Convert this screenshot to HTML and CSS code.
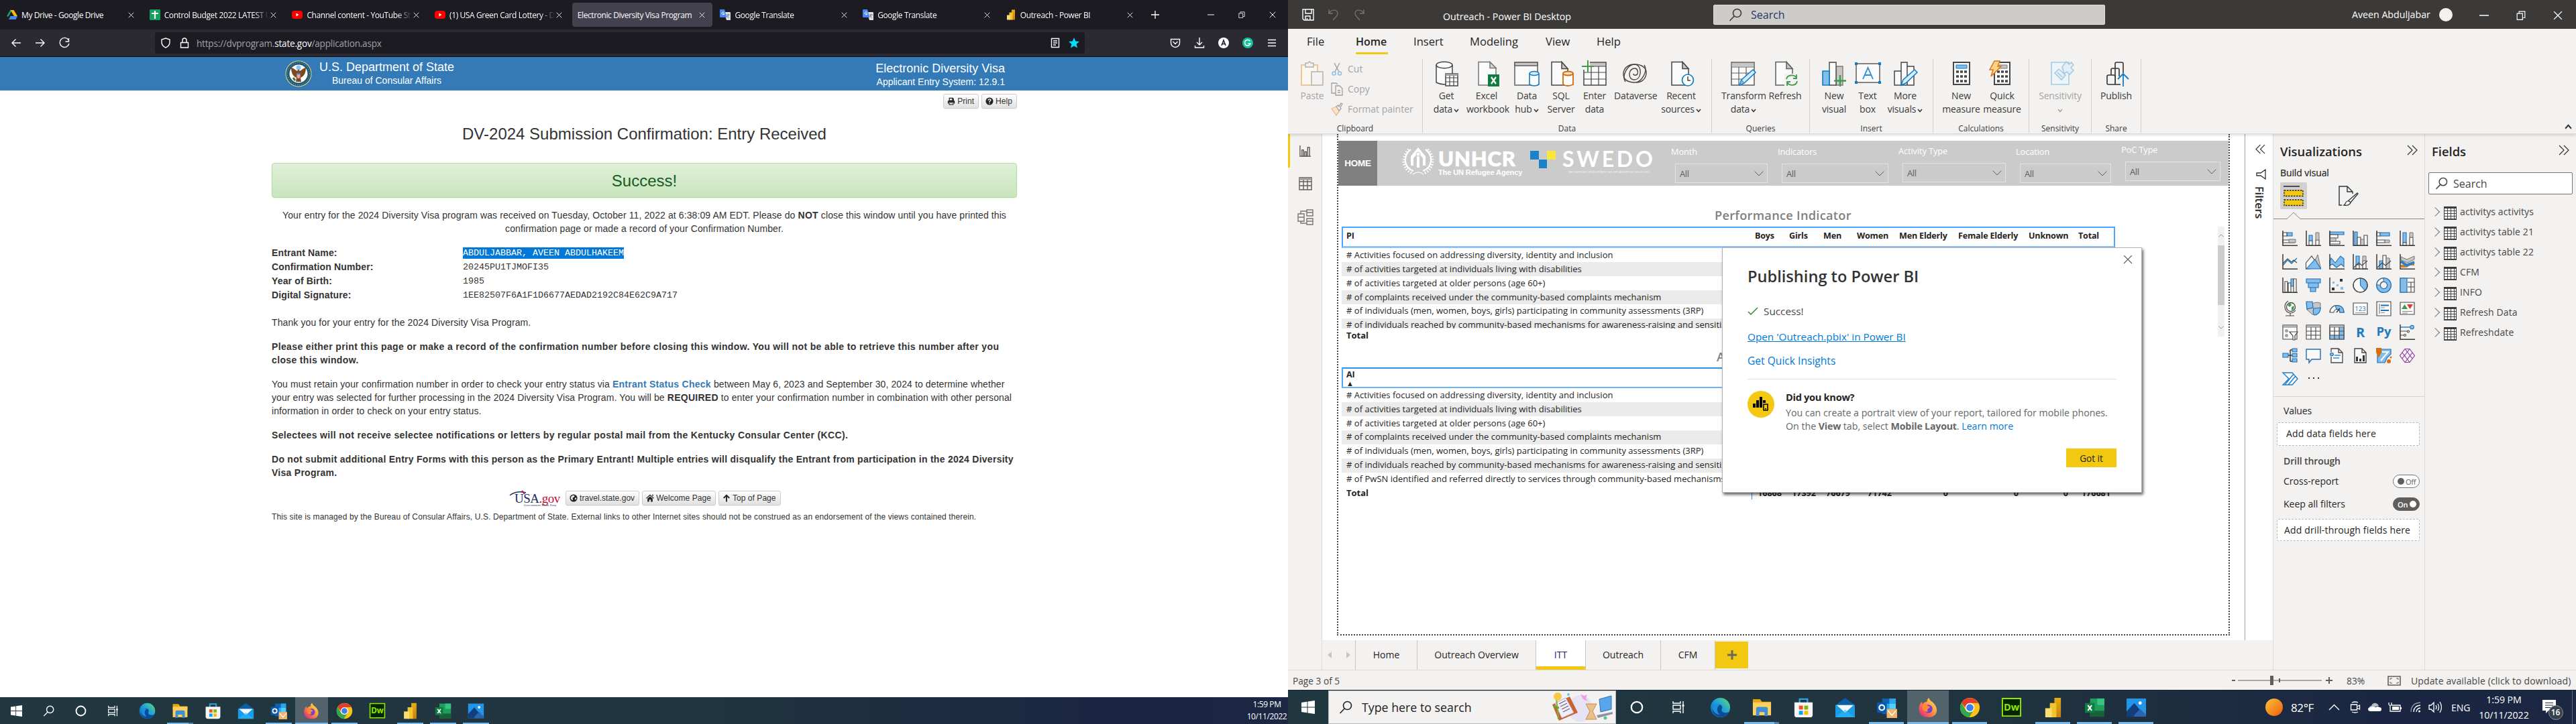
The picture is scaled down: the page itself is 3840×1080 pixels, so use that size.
FILE: index.html
```html
<!DOCTYPE html>
<html lang="en">
<head>
<meta charset="utf-8">
<title>Desktop</title>
<link rel="stylesheet" href="styles.css">
</head>
<body>
<svg class="sprite" aria-hidden="true">
  <defs>
    <linearGradient id="gEdge" x1="0" y1="1" x2="1" y2="0"><stop offset="0" stop-color="#0c59a4"/><stop offset=".5" stop-color="#1b9de2"/><stop offset="1" stop-color="#5fe06a"/></linearGradient>
    <linearGradient id="gFox" x1="1" y1="0" x2="0" y2="1"><stop offset="0" stop-color="#fff44f"/><stop offset=".45" stop-color="#ff9640"/><stop offset="1" stop-color="#e31587"/></linearGradient>
    <linearGradient id="gSun" x1="0" y1="0" x2="1" y2="1"><stop offset="0" stop-color="#f8c43a"/><stop offset="1" stop-color="#ee5d0a"/></linearGradient>
    <linearGradient id="gBi" x1="0" y1="0" x2="0" y2="1"><stop offset="0" stop-color="#e6ad10"/><stop offset="1" stop-color="#c87e0e"/></linearGradient>
  </defs>
  <symbol id="win" viewBox="0 0 20 20"><path fill="#fff" d="M0 3l8.500-1.200V9.500H0zM9.500 1.600L20 0v9.500H9.500zM0 10.500h8.500v7.700L0 17zM9.500 10.500H20V20L9.500 18.400z"/></symbol>
  <symbol id="mag" viewBox="0 0 20 20"><g fill="none" stroke="currentColor" stroke-width="1.600"><circle cx="12.500" cy="7.500" r="6"/><path d="M8.200 12L1.500 19"/></g></symbol>
  <symbol id="ring" viewBox="0 0 20 20"><circle cx="10" cy="10" r="8.200" fill="none" stroke="#fff" stroke-width="2.200"/></symbol>
  <symbol id="tview" viewBox="0 0 20 20"><g fill="none" stroke="#fff" stroke-width="1.400"><path d="M2 1v3h11V1M2 19v-3h11v3M2 7h11v6H2zM17 1v18"/><path d="M15.500 7.500h3" stroke-width="2.500"/></g></symbol>
  <symbol id="edge" viewBox="0 0 32 32"><circle cx="16" cy="16" r="15" fill="url(#gEdge)"/><path d="M4 20C3 11 17 8 19 15c0 3-2 3-1 6 2 4 8 4 12 1-4 8-14 11-21 6-3-2-5-5-5-8z" fill="#0b4c97"/><path d="M15 12c-5 3-5 10 0 15-8-1-13-8-10-13 2-3 7-4 10-2z" fill="#1b8fd8"/></symbol>
  <symbol id="folder" viewBox="0 0 32 32"><path fill="#e8a50c" d="M2 3h11l3 4h14v6H2z"/><path fill="#ffd15c" d="M2 8h28v20H2z"/><path fill="#3d8fd6" d="M7 29V18q0-3 3-3h12q3 0 3 3v11h-5v-6h-8v6z"/></symbol>
  <symbol id="store" viewBox="0 0 32 32"><path d="M10 9V3h12v6" fill="none" stroke="#2ea3ea" stroke-width="2.500"/><path fill="#f5f5f5" d="M2 8h28v19q0 4-4 4H6q-4 0-4-4z"/><path fill="#f25022" d="M9 13h6v6H9z"/><path fill="#7fba00" d="M17 13h6v6h-6z"/><path fill="#00a4ef" d="M9 21h6v6H9z"/><path fill="#ffb900" d="M17 21h6v6h-6z"/></symbol>
  <symbol id="mail" viewBox="0 0 32 32"><path fill="#0a5ea8" d="M1 12L16 1l15 11z"/><path fill="#1a9be8" d="M1 12h30v19H1z"/><path fill="#f4f8fb" d="M3 12h26L16 24z"/><path fill="#30b8f5" d="M1 31l15-12 15 12z" opacity=".6"/></symbol>
  <symbol id="outlook" viewBox="0 0 32 32"><path fill="#0f63b5" d="M9 2h21v24H9z"/><path fill="#2ba6ee" d="M20 2h10v8H20zM9 10h11v8H9z"/><path fill="#50d0ff" d="M20 10h10v8H20z"/><path fill="#0a58ad" d="M1 8h15v16H1z"/><circle cx="8.500" cy="16" r="4" fill="none" stroke="#fff" stroke-width="2.200"/><path fill="#f0b56c" d="M16 18h16v14H16z"/><path d="M18 21l6 7 6-7" fill="none" stroke="#fff" stroke-width="1.500"/></symbol>
  <symbol id="firefox" viewBox="0 0 32 32"><path fill="url(#gFox)" d="M17 1c1 4 4 5 7 8 8 8 7 22-8 22C4 31 0 22 2 14c1-3 2-5 4-7l1 4c2-3 5-4 7-4 0-3 1-5 3-6z"/><circle cx="16" cy="18" r="6.500" fill="#7a3fd0"/><path fill="#ff8b2e" d="M8 13c3-2 6-1 8 1 3 0 3 2 1 3-3 1-3 4-1 5-6 2-11-4-8-9z"/></symbol>
  <symbol id="chrome" viewBox="0 0 32 32"><circle cx="16" cy="16" r="15" fill="#fbc116"/><path fill="#e33b2e" d="M3 8.500a15 15 0 0126 .5H16a7 7 0 00-7 7z"/><path fill="#2da94f" d="M3 8.500A15 15 0 0015 31l6.500-11a7 7 0 01-12 0z"/><circle cx="16" cy="16" r="7" fill="#fff"/><circle cx="16" cy="16" r="5.500" fill="#3b7ded"/></symbol>
  <symbol id="dw" viewBox="0 0 32 32"><path fill="#072401" stroke="#8fe800" stroke-width="2" d="M2 2h28v27H2z"/><text x="16" y="21" text-anchor="middle" font-family="Open Sans,sans-serif" font-size="15" font-weight="700" fill="#8fe800">Dw</text></symbol>
  <symbol id="pbi" viewBox="0 0 32 32"><path fill="url(#gBi)" d="M18 1h10v30H18z"/><path fill="#f2c430" d="M11 9h10v22H11z"/><path fill="#f9df72" d="M4 17h10v14H4z"/></symbol>
  <symbol id="excel" viewBox="0 0 32 32"><path fill="#1f9d5c" d="M9 2h22v28H9z"/><path fill="#37c481" d="M20 2h11v10H20z"/><path fill="#17613a" d="M9 21h22v9H9z"/><path fill="#107c41" d="M1 9h15v15H1z"/><path stroke="#fff" stroke-width="2.200" d="M5.500 12.500l6 8M11.500 12.500l-6 8"/></symbol>
  <symbol id="photos" viewBox="0 0 32 32"><path fill="#2196e8" d="M1 2h30v28H1z"/><path fill="#103f7c" d="M1 22L13 9l17 21H1z"/><path fill="#2b63ad" d="M14 26l8-8 9 9v3H12z"/><circle cx="22" cy="9" r="2.500" fill="#fff"/></symbol>
  <symbol id="x" viewBox="0 0 10 10"><path d="M.8.8l8.400 8.400M9.200.8L.8 9.200" fill="none" stroke="currentColor" stroke-width="1"/></symbol>
  <symbol id="restore" viewBox="0 0 12 12"><path d="M1 3.500h7v8H1zM3.500 3V1H11v8H8.500" fill="none" stroke="currentColor"/></symbol>
  <symbol id="gdrive" viewBox="0 0 16 16"><path fill="#1fa463" d="M5.300 1H8L3 10 1 11 0 10z"/><path fill="#fbbc04" d="M5.500 1h5L16 10h-5z"/><path fill="#4285f4" d="M3 15l2.500-5H16l-2.500 5z"/></symbol>
  <symbol id="sheets" viewBox="0 0 16 16"><rect width="16" height="16" rx="1.500" fill="#12a05c"/><path d="M8 2v12M3 6h10" stroke="#fff" stroke-width="2.200"/></symbol>
  <symbol id="yt" viewBox="0 0 16 16"><rect y="2" width="16" height="12" rx="4" fill="#f00"/><path fill="#fff" d="M6.500 5.500l4 2.500-4 2.500z"/></symbol>
  <symbol id="gtr" viewBox="0 0 16 16"><path fill="#dcdfe3" d="M6 4h9q1 0 1 1v11h-6z"/><path fill="#4a86f0" d="M0 1q0-1 1-1h6l3.500 12H1q-1 0-1-1z"/><path d="M6.500 4.500a2 2 0 10.500 2H5" fill="none" stroke="#fff" stroke-width="1"/><path d="M10 8h5M12.500 7v1c0 2-1 3-2 4m.5-3c1 2 2 3 3 3.500" fill="none" stroke="#6a7380" stroke-width=".9"/></symbol>
  <symbol id="dbl" viewBox="0 0 16 16"><path d="M1 1l7 7-7 7M8 1l7 7-7 7" fill="none" stroke="#333" stroke-width="1.200"/></symbol>
  <symbol id="car" viewBox="0 0 8 6"><path d="M1 1l3 3.500L7 1" fill="none" stroke="currentColor" stroke-width="1.600"/></symbol>
  <symbol id="chev" viewBox="0 0 14 8"><path d="M.7.7L7 7 13.300.7" fill="none" stroke="currentColor" stroke-width="1"/></symbol>
  <symbol id="globe" viewBox="0 0 14 14"><circle cx="7" cy="7" r="6.500" fill="#222"/><path fill="#eee" d="M6 2l3 1-1 2-3 2 1 2-1 2-3-3 1-4zM10 6l2 1-1 3-2-1z"/></symbol>
</svg>

<div class="desktop">
<!-- ============ left monitor: Firefox ============ -->
<section class="screen firefox">
  <div class="tabs">
    <div class="tab"><svg class="i16"><use href="#gdrive"/></svg><span>My Drive - Google Drive</span><svg class="tx"><use href="#x"/></svg></div>
    <div class="tab"><svg class="i16"><use href="#sheets"/></svg><span>Control Budget 2022 LATEST U</span><svg class="tx"><use href="#x"/></svg></div>
    <div class="tab"><svg class="i16"><use href="#yt"/></svg><span>Channel content - YouTube St</span><svg class="tx"><use href="#x"/></svg></div>
    <div class="tab"><svg class="i16"><use href="#yt"/></svg><span>(1) USA Green Card Lottery - D</span><svg class="tx"><use href="#x"/></svg></div>
    <div class="tab active"><span>Electronic Diversity Visa Program</span><svg class="tx"><use href="#x"/></svg></div>
    <div class="tab"><svg class="i16"><use href="#gtr"/></svg><span>Google Translate</span><svg class="tx"><use href="#x"/></svg></div>
    <div class="tab"><svg class="i16"><use href="#gtr"/></svg><span>Google Translate</span><svg class="tx"><use href="#x"/></svg></div>
    <div class="tab"><svg class="i16"><use href="#pbi"/></svg><span>Outreach - Power BI</span><svg class="tx"><use href="#x"/></svg></div>
    <svg class="plus" viewBox="0 0 12 12"><path d="M6 0v12M0 6h12" stroke="#fff" stroke-width="1.300"/></svg>
    <div class="wctl"><svg viewBox="0 0 10 10"><path d="M0 5h10" stroke="#fff"/></svg><svg><use href="#restore"/></svg><svg><use href="#x"/></svg></div>
  </div>
  <div class="nav">
    <div class="navbtns">
      <svg viewBox="0 0 16 16"><path d="M15 8H2M7.500 2.500L2 8l5.500 5.500" class="ln"/></svg>
      <svg viewBox="0 0 16 16"><path d="M1 8h13M8.500 2.500L14 8l-5.500 5.500" class="ln"/></svg>
      <svg viewBox="0 0 16 16"><path d="M14 3.500A7 7 0 1015 9M14.500 1v5h-5" class="ln"/></svg>
    </div>
    <div class="url">
      <svg viewBox="0 0 16 16"><path d="M8 1l6 2v4c0 4-2.500 6.500-6 8.200C4.500 13.500 2 11 2 7V3z" class="ln"/></svg>
      <svg viewBox="0 0 16 16"><path d="M2.500 7.500h11v7.500h-11zM5 7.500V4q0-3 3-3t3 3v3.500" class="ln"/></svg>
      <p>https://dvprogram.<b>state.gov</b>/application.aspx</p>
      <svg viewBox="0 0 16 16"><path d="M2.500 1.500h11v13h-11zM5 5h6M5 8h6M5 11h4" class="ln"/></svg>
      <svg viewBox="0 0 16 16"><path fill="#00ddff" d="M8 0l2.300 5.400 5.700.5-4.300 3.800L13 15.500 8 12.500l-5 3 1.300-5.800L0 5.900l5.700-.5z"/></svg>
    </div>
    <div class="navright">
      <svg viewBox="0 0 16 16"><path d="M1.500 2.500h13V8a6.500 6.500 0 01-13 0zM4.500 6L8 9.500 11.500 6" class="ln"/></svg>
      <svg viewBox="0 0 16 16"><path d="M8 0v11M4 7l4 4 4-4M1.500 12v3h13v-3" class="ln"/></svg>
      <svg viewBox="0 0 16 16"><circle cx="8" cy="8" r="8" fill="#fff"/><path d="M5 12l3-8 3 8M6 9.500h4" fill="none" stroke="#222" stroke-width="1.600"/></svg>
      <svg viewBox="0 0 16 16"><circle cx="8" cy="8" r="8" fill="#15c39a"/><path d="M11.500 5.500A4.300 4.300 0 1012 9H8.500" fill="none" stroke="#fff" stroke-width="1.500"/></svg>
      <svg viewBox="0 0 16 16"><path d="M2 3.500h12M2 8h12M2 12.500h12" class="ln"/></svg>
    </div>
  </div>
  <div class="dos">
    <svg class="seal" viewBox="0 0 40 40"><circle cx="20" cy="20" r="19.500" fill="#e4d58c"/><circle cx="20" cy="20" r="18.500" fill="#1b5a78"/><circle cx="20" cy="20" r="16.500" fill="none" stroke="#d8c97c" stroke-width="1" stroke-dasharray="1 2"/><circle cx="20" cy="20" r="13.500" fill="#fff"/><circle cx="20" cy="11" r="3.500" fill="#8fc4e4"/><path fill="#7a4a22" d="M9 11c3 0 6 3 9 5l2-3 2 3c3-2 6-5 9-5 0 8-3 13-8 15l1 6h-8l1-6c-5-2-8-7-8-15z"/><path fill="#fff" d="M17.500 20h5v5q-2.500 4-5 0z"/><path fill="#4a80c0" d="M17 19h6v2h-6z"/><path d="M18 21v5M20 21v6M22 21v5" stroke="#c8303a" stroke-width=".9"/><path d="M12 26l3 4" stroke="#3c7a34" stroke-width="3"/></svg>
    <div class="dosl"><h1>U.S. Department of State</h1><h2>Bureau of Consular Affairs</h2></div>
    <div class="dosr"><h1>Electronic Diversity Visa</h1><h2>Applicant Entry System: 12.9.1</h2></div>
  </div>
  <main class="doc">
    <div class="tools">
      <a class="btn"><svg viewBox="0 0 14 14"><path fill="#222" d="M3 1h7l1.500 1.500V6H3zM1 6h12v5h-2V9H3v2H1z"/><path fill="#222" d="M3 10h8v3.500H3z"/><path fill="#eee" d="M4.500 2.300h4v3h-4zM4.300 10.500h5.400v1.700H4.300z"/></svg>Print</a>
      <a class="btn"><svg viewBox="0 0 14 14"><circle cx="7" cy="7" r="6.500" fill="#222"/><path d="M4.800 5.500q0-2.200 2.200-2.200t2.200 2Q9.200 6.500 7 7.300V8.500" fill="none" stroke="#fff" stroke-width="1.600"/><path fill="#fff" d="M6.200 9.600h1.700v1.600H6.200z"/></svg>Help</a>
    </div>
    <h3>DV-2024 Submission Confirmation: Entry Received</h3>
    <div class="ok">Success!</div>
    <p class="mid">Your entry for the 2024 Diversity Visa program was received on Tuesday, October 11, 2022 at 6:38:09 AM EDT. Please do <b>NOT</b> close this window until you have printed this<br>confirmation page or made a record of your Confirmation Number.</p>
    <dl>
      <dt>Entrant Name:</dt><dd><mark>ABDULJABBAR, AVEEN ABDULHAKEEM</mark></dd>
      <dt>Confirmation Number:</dt><dd>20245PU1TJMOFI35</dd>
      <dt>Year of Birth:</dt><dd>1985</dd>
      <dt>Digital Signature:</dt><dd>1EE82507F6A1F1D6677AEDAD2192C84E62C9A717</dd>
    </dl>
    <p>Thank you for your entry for the 2024 Diversity Visa Program.</p>
    <p><b class="wide">Please either print this page or make a record of the confirmation number before closing this window. You will not be able to retrieve this number after you<br>close this window.</b></p>
    <p>You must retain your confirmation number in order to check your entry status via <b class="lk">Entrant Status Check</b> between May 6, 2023 and September 30, 2024 to determine whether<br>your entry was selected for further processing in the 2024 Diversity Visa Program. You will be <b>REQUIRED</b> to enter your confirmation number in combination with other personal<br>information in order to check on your entry status.</p>
    <p><b class="wide">Selectees will not receive selectee notifications or letters by regular postal mail from the Kentucky Consular Center (KCC).</b></p>
    <p><b>Do not submit additional Entry Forms with this person as the Primary Entrant! Multiple entries will disqualify the Entrant from participation in the 2024 Diversity<br>Visa Program.</b></p>
    <div class="foot">
      <div class="usa"><svg viewBox="0 0 30 22"><path d="M0 7Q10-1 24 3" fill="none" stroke="#23305f" stroke-width="1.500"/><path d="M18 0l4 5" stroke="#c0113c" stroke-width="2"/></svg><span>USA<i>.gov</i></span><small>Government Made Easy</small></div>
      <a class="btn"><svg><use href="#globe"/></svg>travel.state.gov</a>
      <a class="btn"><svg viewBox="0 0 14 14"><path fill="#222" d="M7 .5l7 6.500-1 1-6-5.500L1 8 0 7zM10.500 1h2v3l-2-2zM2.500 8L7 4l4.500 4v5.500h-3V9.500h-3v4h-3z"/></svg>Welcome Page</a>
      <a class="btn"><svg viewBox="0 0 14 14"><path d="M7 2v11.500M2 7l5-5 5 5" fill="none" stroke="#222" stroke-width="2.200"/></svg>Top of Page</a>
    </div>
    <p class="fine">This site is managed by the Bureau of Consular Affairs, U.S. Department of State. External links to other Internet sites should not be construed as an endorsement of the views contained therein.</p>
  </main>
  <div class="taskbar tb1">
    <div class="slot sys"><svg class="sm"><use href="#win"/></svg></div>
    <div class="slot sys"><svg class="sm"><use href="#mag"/></svg></div>
    <div class="slot sys"><svg class="sm"><use href="#ring"/></svg></div>
    <div class="slot sys"><svg class="sm"><use href="#tview"/></svg></div>
    <div class="slot firstapp"><svg><use href="#edge"/></svg></div>
    <div class="slot run two"><svg><use href="#folder"/></svg></div>
    <div class="slot"><svg><use href="#store"/></svg></div>
    <div class="slot"><svg><use href="#mail"/></svg></div>
    <div class="slot run"><svg><use href="#outlook"/></svg></div>
    <div class="slot run on"><svg><use href="#firefox"/></svg></div>
    <div class="slot run"><svg><use href="#chrome"/></svg></div>
    <div class="slot"><svg><use href="#dw"/></svg></div>
    <div class="slot run"><svg><use href="#pbi"/></svg></div>
    <div class="slot run"><svg><use href="#excel"/></svg></div>
    <div class="slot run"><svg><use href="#photos"/></svg></div>
    <div class="clock">1:59 PM<br>10/11/2022</div>
  </div>
</section>

<!-- ============ right monitor: Power BI Desktop ============ -->
<section class="screen bi">
  <header class="title">
    <svg class="qa" viewBox="0 0 18 18"><path d="M1 1h16v16H3l-2-2zM5 1v6h9V1M5 17v-6h7v6M7.500 17v-3" fill="none" stroke="#fff" stroke-width="1.400"/></svg>
    <svg class="qa" viewBox="0 0 18 18"><path d="M2 1v6h6M2 7C5 1 15 0 15 7c0 4-4 6-7 10" fill="none" stroke="#777574" stroke-width="1.300"/></svg>
    <svg class="qa" viewBox="0 0 18 18"><path d="M16 1v6h-6M16 7C13 1 3 0 3 7c0 4 4 6 7 10" fill="none" stroke="#777574" stroke-width="1.300"/></svg>
    <span class="cap">Outreach - Power BI Desktop</span>
    <div class="tsearch"><svg><use href="#mag"/></svg>Search</div>
    <span class="user">Aveen Abduljabar</span><i class="ava"></i>
    <div class="bctl"><svg viewBox="0 0 14 14"><path d="M0 7h14" stroke="#fff" stroke-width="1.500"/></svg><svg><use href="#restore"/></svg><svg><use href="#x"/></svg></div>
  </header>
  <nav class="menu"><span>File</span><span class="cur">Home</span><span>Insert</span><span>Modeling</span><span>View</span><span>Help</span></nav>
  <div class="ribbon">
    <div class="grp g1">
      <div class="items">
        <div class="rb dim" style="width:44px"><svg viewBox="0 0 38 38"><path d="M3 6h24v30H3z" fill="#faf6f0" stroke="#f0c49a" stroke-width="2"/><path d="M9 3h4q2-4 4 0h4v6H9z" fill="#f3f2f1" stroke="#b5b3b1" stroke-width="1.500"/><path d="M18 16h17v20H18z" fill="#f3f2f1" stroke="#b5b3b1" stroke-width="1.500"/></svg>Paste</div>
        <div class="small">
          <span><svg viewBox="0 0 18 20"><path d="M5 1l7 13M13 1L6 14" stroke="#a19f9d" stroke-width="1.400"/><g fill="none" stroke="#92c0e0" stroke-width="1.600"><circle cx="4.500" cy="16.500" r="2.500"/><circle cx="13" cy="16.500" r="2.500"/></g></svg>Cut</span>
          <span><svg viewBox="0 0 18 20"><path d="M7 16H1V1h7l2 2M7 5h6l4 4v10H7zM10 12h4M10 15h4" fill="none" stroke="#a19f9d" stroke-width="1.300"/></svg>Copy</span>
          <span><svg viewBox="0 0 18 20"><path d="M1 9l7-3 5 6-5 7z" fill="#fbe3cb" stroke="#eeb98a" stroke-width="1.300"/><path d="M8 6l3-2 1 2 3-5 2 1-3 5 1 2-3 3z" fill="#f3f2f1" stroke="#a19f9d" stroke-width="1.300"/></svg>Format painter</span>
        </div>
      </div><em>Clipboard</em>
    </div>
    <div class="grp g2">
      <div class="items">
        <div class="rb" style="width:60px"><svg viewBox="0 0 38 38"><path d="M4 6v26q12 6 24 0V6" fill="#fafafa" stroke="#484644" stroke-width="1.500"/><ellipse cx="16" cy="6" rx="12" ry="4.700" fill="#fafafa" stroke="#484644" stroke-width="1.500"/><path d="M18 19h18v18H18z" fill="#fafafa" stroke="#484644" stroke-width="1.500"/><path d="M18 20.500h18" stroke="#a19f9d" stroke-width="3"/><path d="M18 25h18M18 31h18M24 22v15M30 22v15" stroke="#484644" stroke-width="1.200"/></svg>Get<br><s>data<svg><use href="#car"/></svg></s></div>
        <div class="rb" style="width:60px"><svg viewBox="0 0 38 38"><path d="M7 1.500h17l9 9V36H7z" fill="#fafafa" stroke="#797775" stroke-width="1.500"/><path d="M24 1.500v9h9z" fill="#d8d6d4" stroke="#797775" stroke-width="1.500"/><path fill="#107c41" d="M21 20h17v18H21z"/><path d="M26 24l7 10M33 24l-7 10" stroke="#fff" stroke-width="2.200"/></svg>Excel<br>workbook</div>
        <div class="rb" style="width:60px"><svg viewBox="0 0 38 38"><path d="M1 2h34v34H1z" fill="#fafafa" stroke="#605e5c" stroke-width="1.500"/><path fill="#c8c6c4" stroke="#605e5c" stroke-width="1.500" d="M1 2h34v5H1z"/><path d="M23 19v16q7 4 14 0V19" fill="#fff" stroke="#0f7bc4" stroke-width="1.600"/><ellipse cx="30" cy="18.500" rx="7" ry="3" fill="#d6ebfa" stroke="#0f7bc4" stroke-width="1.600"/></svg>Data<br><s>hub<svg><use href="#car"/></svg></s></div>
        <div class="rb" style="width:42px"><svg viewBox="0 0 38 38"><path d="M5 1.500h15l9 10V36H5z" fill="#fafafa" stroke="#484644" stroke-width="1.500"/><path d="M20 1.500v10h9z" fill="#c8c6c4" stroke="#484644" stroke-width="1.500"/><path d="M22 19v16q7 4 15 0V19" fill="#fff" stroke="#d06a0c" stroke-width="1.800"/><ellipse cx="29.500" cy="18.500" rx="7.500" ry="3" fill="#fbe0c4" stroke="#d06a0c" stroke-width="1.800"/></svg>SQL<br>Server</div>
        <div class="rb" style="width:58px"><svg viewBox="0 0 38 38"><path d="M3 2h33v34H3z" fill="#fafafa" stroke="#484644" stroke-width="1.500"/><path fill="#c8c6c4" d="M12 3h23v5H12z"/><path d="M3 17h33M3 27h33M14 8v28M25 8v28M14 8h22" stroke="#484644" stroke-width="1.200"/><path d="M-1-1h13v14H-1z" fill="#f3f2f1"/><path d="M9-1v18M0 8h18" stroke="#3f9a4f" stroke-width="2"/></svg>Enter<br>data</div>
        <div class="rb" style="width:62px"><svg viewBox="0 0 38 38"><g fill="none" stroke="#484644" stroke-width="1.400"><path d="M33 6c6 9-4 26-14 26C8 32 1 27 2 18 3 9 11 5 18 5c6 0 10 5 9 14-1 6-5 9-9 9-5 0-7-4-7-9s4-8 8-8 5 5 4 8-6 3-6 0"/><path d="M5 31c-6-9 3-26 14-26 10 0 18 5 17 14s-8 13-15 13"/></g></svg>Dataverse</div>
        <div class="rb" style="width:76px"><svg viewBox="0 0 38 38"><path d="M5 1.500h16l9 10V36H5z" fill="#fafafa" stroke="#484644" stroke-width="1.500"/><path d="M21 1.500v10h9z" fill="#c8c6c4" stroke="#484644" stroke-width="1.500"/><circle cx="29" cy="28.500" r="8.500" fill="#fff" stroke="#0f7bc4" stroke-width="1.700"/><path d="M29 23v6h4" fill="none" stroke="#484644" stroke-width="1.500"/></svg>Recent<br><s>sources<svg><use href="#car"/></svg></s></div>
      </div><em>Data</em>
    </div>
    <div class="grp g3">
      <div class="items">
        <div class="rb" style="width:66px"><svg viewBox="0 0 38 38"><path d="M1 2h34v34H1z" fill="#fafafa" stroke="#605e5c" stroke-width="1.500"/><path fill="#c8c6c4" d="M1.700 3h32.500v5H1.700z"/><path d="M1 9h34M1 18h34M1 27h24M12 9v27M23 9v18" stroke="#605e5c" stroke-width="1.200"/><path d="M13 36l3-8 17-15 4 4-17 16z" fill="#d6ebfa" stroke="#0f7bc4" stroke-width="1.500"/><path fill="#84bdea" stroke="#0f7bc4" d="M13 36l3-8 4 5z"/></svg>Transform<br><s>data<svg><use href="#car"/></svg></s></div>
        <div class="rb" style="width:58px"><svg viewBox="0 0 38 38"><path d="M5 1.500h16l9 10V36H5z" fill="#fafafa" stroke="#605e5c" stroke-width="1.500"/><path d="M21 1.500v10h9z" fill="#c8c6c4" stroke="#605e5c" stroke-width="1.500"/><path d="M18 19h20v19H18z" fill="#f3f2f1"/><path d="M21 27c1-6 11-8 15-2M36 20v6h-5M37 30c-1 7-11 8-15 2M22 37v-6h5" fill="none" stroke="#3f9a4f" stroke-width="1.800"/></svg>Refresh</div>
      </div><em>Queries</em>
    </div>
    <div class="grp g4">
      <div class="items">
        <div class="rb" style="width:48px"><svg viewBox="0 0 38 38"><path fill="#c8c6c4" stroke="#797775" stroke-width="1.300" d="M22 8h10v28H22z"/><path fill="#fafafa" stroke="#484644" stroke-width="1.400" d="M12 2h10v34H12z"/><path fill="#84bdea" stroke="#0f7bc4" stroke-width="1.600" d="M2 15h10v21H2z"/><path d="M28 21v17M19 29.500h18" stroke="#3f9a4f" stroke-width="2.400"/></svg>New<br>visual</div>
        <div class="rb" style="width:52px"><svg viewBox="0 0 38 38"><path fill="#fafafa" stroke="#605e5c" stroke-width="1.500" d="M2 4h35v28H2z"/><path fill="#0f7bc4" d="M0 2h4v4H0zM35 2h4v4h-4zM0 30h4v4H0zM35 30h4v4h-4z"/><path d="M12 27l7.500-17L27 27M14.500 21h10" fill="none" stroke="#2a8dd4" stroke-width="1.800"/></svg>Text<br>box</div>
        <div class="rb" style="width:60px"><svg viewBox="0 0 38 38"><path fill="#fafafa" stroke="#484644" stroke-width="1.500" d="M13 2h9v34h-9zM3 15h10v21H3zM22 8h10v28H22z"/><path d="M13 36l3-8 17-15 4 4-17 16z" fill="#d6ebfa" stroke="#0f7bc4" stroke-width="1.500"/></svg>More<br><s>visuals<svg><use href="#car"/></svg></s></div>
      </div><em>Insert</em>
    </div>
    <div class="grp g5">
      <div class="items">
        <div class="rb" style="width:61px"><svg viewBox="0 0 38 38"><path fill="#fafafa" stroke="#484644" stroke-width="2" d="M7 2h24v33H7z"/><path fill="#84bdea" stroke="#0f7bc4" d="M11 6h16v5H11z"/><path d="M11 16h16M11 23h16M11 30h16" stroke="#484644" stroke-width="3.400" stroke-dasharray="4 2"/></svg>New<br>measure</div>
        <div class="rb" style="width:61px"><svg viewBox="0 0 38 38"><path fill="#fafafa" stroke="#484644" stroke-width="2" d="M7 2h23v33H7z"/><path fill="#c8c6c4" stroke="#797775" d="M14 6h12v5H14z"/><path d="M11 16h16M11 23h16M11 30h16" stroke="#484644" stroke-width="3.400" stroke-dasharray="4 2"/><path fill="#fbd48a" stroke="#d9780f" stroke-width="1.500" d="M7 0h8l-3 8h5L2 23l3-10H0z"/></svg>Quick<br>measure</div>
      </div><em>Calculations</em>
    </div>
    <div class="grp g6">
      <div class="items"><div class="rb dim" style="width:92px"><svg viewBox="0 0 38 38"><path fill="#eef4f8" stroke="#a4cbe4" stroke-width="1.600" d="M6 2h26v33H6z"/><path d="M11 18l6-6 10 9-6 7zM15 17l7 7M22 9l6-8 4 4 4-3 3 4-4 4 4 4-6 6-4-4-4 3z" fill="#e2eff7" stroke="#a4cbe4" stroke-width="1.600"/></svg>Sensitivity<br><s><svg><use href="#car"/></svg></s></div></div><em>Sensitivity</em>
    </div>
    <div class="grp g7">
      <div class="items"><div class="rb" style="width:73px"><svg viewBox="0 0 38 38"><g fill="#f3f2f1" stroke="#323130" stroke-width="1.600"><path d="M17 34V4q0-2 2-2h8q2 0 2 2v14M11 34V13q0-2 2-2h8q2 0 2 2v10"/><path d="M20 35H7q-2 0-2-2V23q0-2 2-2h8q2 0 2 2v12h8"/></g><path d="M29 38V19M21 27l8-8 8 8" fill="none" stroke="#0f7bc4" stroke-width="1.800"/></svg>Publish</div></div><em>Share</em>
    </div>
    <svg class="fold" viewBox="0 0 10 7"><path d="M1 6l4-4.500L9 6" fill="none" stroke="#333" stroke-width="1.800"/></svg>
  </div>

  <div class="work">
    <div class="rail">
      <div class="rsel"><svg viewBox="0 0 18 18"><path d="M1 0v17h17M4 17V7h2.500v10M8.500 17v-7H11v7M13 17V3h3v14" fill="none" stroke="#484644" stroke-width="1.300"/></svg></div>
      <svg viewBox="0 0 20 20"><path d="M1 1h18v18H1zM1 7h18M1 13h18M7 4v15M13 4v15" fill="none" stroke="#605e5c" stroke-width="1.400"/><path d="M1 3h18" stroke="#a19f9d" stroke-width="3"/></svg>
      <svg viewBox="0 0 24 24"><path d="M1 7h9v11H1zM14 1h9v9h-9zM14 14h9v9h-9zM1 12h9M14 5h9M14 18h9M5 7V3h9M5 18v3h9" fill="none" stroke="#797775" stroke-width="1.400"/></svg>
    </div>
    <div class="center">
      <div class="canvasrow">
        <div class="canvas">
          <div class="page">
            <div class="band">
              <b class="home">HOME</b>
              <svg class="emblem" viewBox="0 0 48 42"><g fill="none" stroke="#fff" stroke-width="2.200"><path d="M13 4C2 12 1 30 17 36"/><path d="M35 4c11 8 12 26-4 32"/><path d="M16 41q8-6 16 0" stroke-width="1.200"/></g><path d="M10 4C-1 14 0 32 14 39M38 4c11 10 10 28-4 35" fill="none" stroke="#fff" stroke-width="4" stroke-dasharray="1.500 2.500"/><path d="M24 1L13 14v14h4V17l5-6v20h4V11l5 6v11h4V14z" fill="#fff"/><circle cx="24" cy="11" r="3" fill="#fff" stroke="#cbcbcb"/></svg>
              <div class="unhcr"><strong>UNHCR</strong><small>The UN Refugee Agency</small></div>
              <div class="flag"><i></i><i></i><i></i></div>
              <div class="swedo"><strong>SWEDO</strong><small>THE SWEDISH DEVELOPMENT AID ORGANIZATION, SINCE 1991</small></div>
              <div class="sl" style="width:138px"><span>Month</span><div>All<svg><use href="#chev"/></svg></div></div>
              <div class="sl" style="width:159px"><span>Indicators</span><div>All<svg><use href="#chev"/></svg></div></div>
              <div class="sl up1" style="width:154px"><span>Activity Type</span><div>All<svg><use href="#chev"/></svg></div></div>
              <div class="sl" style="width:136px"><span>Location</span><div>All<svg><use href="#chev"/></svg></div></div>
              <div class="sl up3" style="width:142px"><span>PoC Type</span><div>All<svg><use href="#chev"/></svg></div></div>
            </div>
            <div class="tblrow">
              <div class="tbl">
                <h4>Performance Indicator</h4>
                <div class="th"><span>PI</span><span>Boys</span><span>Girls</span><span>Men</span><span>Women</span><span>Men Elderly</span><span>Female Elderly</span><span>Unknown</span><span>Total</span></div>
                <div class="rows r1">
                  <p># Activities focused on addressing diversity, identity and inclusion</p>
                  <p># of activities targeted at individuals living with disabilities</p>
                  <p># of activities targeted at older persons (age 60+)</p>
                  <p># of complaints received under the community-based complaints mechanism</p>
                  <p># of individuals (men, women, boys, girls) participating in community assessments (3RP)</p>
                  <p># of individuals reached by community-based mechanisms for awareness-raising and sensitization</p>
                </div>
                <b class="tot1">Total</b>
              </div>
              <div class="sbar"><svg><use href="#chev"/></svg><i></i><svg><use href="#chev"/></svg></div>
            </div>
            <div class="tbl second">
              <h4>Activity Indicator</h4>
              <div class="th b"><span>AI<br><small>▲</small></span></div>
              <div class="rows r2">
                <p># Activities focused on addressing diversity, identity and inclusion</p>
                <p># of activities targeted at individuals living with disabilities</p>
                <p># of activities targeted at older persons (age 60+)</p>
                <p># of complaints received under the community-based complaints mechanism</p>
                <p># of individuals (men, women, boys, girls) participating in community assessments (3RP)</p>
                <p># of individuals reached by community-based mechanisms for awareness-raising and sensitization</p>
                <p># of PwSN identified and referred directly to services through community-based mechanisms</p>
              </div>
              <div class="tot2"><b>Total</b><b>16868</b><b>17392</b><b>76679</b><b>71742</b><b>0</b><b>0</b><b>0</b><b>176681</b></div>
            </div>
          </div>
        </div>
        <div class="filters">
          <svg class="flip" width="15" height="15"><use href="#dbl"/></svg>
          <svg width="15" height="16" viewBox="0 0 15 16"><path d="M14 1v14L7 10H1V6h6z" fill="none" stroke="#333" stroke-width="1.300"/></svg>
          <span>Filters</span>
        </div>
      </div>
      <div class="ptabs">
        <div class="arr"><svg viewBox="0 0 6 10"><path d="M6 0v10L0 5z" fill="#c8c6c4"/></svg><svg viewBox="0 0 6 10"><path d="M0 0v10l6-5z" fill="#c8c6c4"/></svg></div>
        <span style="width:92px">Home</span><span style="width:177px">Outreach Overview</span><span class="sel" style="width:74px">ITT</span><span style="width:112px">Outreach</span><span style="width:81px">CFM</span>
        <div class="add"><svg viewBox="0 0 14 14"><path d="M7 0v14M0 7h14" stroke="#6b6a55" stroke-width="3"/></svg></div>
      </div>
    </div>
    <aside class="viz">
      <div class="ph"><h5>Visualizations</h5><svg><use href="#dbl"/></svg></div>
      <p class="bv">Build visual</p>
      <div class="modes">
        <div class="m1"><svg viewBox="0 0 30 30"><path d="M0 1h24" stroke="#222" stroke-width="1.500"/><path fill="#f2c811" stroke="#222" stroke-width="1.300" stroke-dasharray="2.500 1.500" d="M1 7h28v8.500H1zM1 21h28v8.500H1z"/></svg></div>
        <svg class="m2" viewBox="0 0 30 30"><path d="M5 29H1V1h12l8 8v3M13 1v8h8" fill="none" stroke="#333" stroke-width="1.400"/><path d="M8 29c3-1 2-5 5-6s6 2 4 4-5 3-9 2zM15 22l13-11 1 1-11 13" fill="#fff" stroke="#333" stroke-width="1.300"/></svg>
      </div>
      <svg class="notch" viewBox="0 0 225 11"><path d="M0 10.500h20l10-9.500 10 9.500h185" fill="none" stroke="#8a8886"/></svg>
      <div class="vg">
        <svg viewBox="0 0 23 23"><path class="w" d="M1 14h17v4H1z"/><path class="b" d="M7 3h8v5H7z"/><path class="g" d="M10 13h10v5H10z"/><path class="w" d="M1 3h6v5H1z"/><path class="k" d="M1 0v22.300h22"/></svg>
        <svg viewBox="0 0 23 23"><path class="w" d="M5 15h5v7H5zM15 14h5v8h-5z"/><path class="b" d="M5 7h5v8H5z"/><path class="g" d="M15 3h5v11h-5z"/><path class="k" d="M1 0v22.300h22"/></svg>
        <svg viewBox="0 0 23 23"><path class="b" d="M1 2h21v4H1z"/><path class="w" d="M1 6h12v5H1zM1 16h15v4H1z"/><path class="g" d="M1 11h9v5H1z"/><path class="k" d="M1 0v22.300h22"/></svg>
        <svg viewBox="0 0 23 23"><path class="b" d="M3 2h4v20H3z"/><path class="w" d="M7 10h5v12H7zM17 7h5v15h-5z"/><path class="g" d="M12 13h5v9h-5z"/><path class="k" d="M1 0v22.300h22"/></svg>
        <svg viewBox="0 0 23 23"><path class="w" d="M1 3h5v5H1zM1 14h12v4H1z"/><path class="b" d="M6 3h14v5H6z"/><path class="g" d="M13 14h7v4h-7z"/><path class="k" d="M1 0v22.300h22"/></svg>
        <svg viewBox="0 0 23 23"><path class="b" d="M5 3h5v15H5z"/><path class="w" d="M5 18h5v4H5zM15 10h5v12h-5z"/><path class="g" d="M15 3h5v7h-5z"/><path class="k" d="M1 0v22.300h22"/></svg>

        <svg viewBox="0 0 23 23"><path d="M1 17L8 9l6 5 8-8" class="kb"/><path d="M1 14l7-7 6 5 3-3 5 4" class="k1"/><path class="k" d="M1 0v22.300h22"/></svg>
        <svg viewBox="0 0 23 23"><path class="g" d="M10 17l8-16 4.500 20z"/><path class="w" d="M.5 13L9 3l6 9-8 10H.5z"/><path class="b" d="M1 22l13-14 8.500 14z"/></svg>
        <svg viewBox="0 0 23 23"><path class="b" d="M1 10l2-4 6 7 8-10 5 4v12l-4-4-7 5-6-5-4 2z"/><path class="k" d="M1 0v22.300h22"/></svg>
        <svg viewBox="0 0 23 23"><path class="b" d="M5 3h5v13H5z"/><path class="w" d="M5 16h5v6H5zM15 10h5v12h-5z"/><path class="g" d="M15 3h5v7h-5z"/><path class="k1" d="M2 20l7-7 5 4 8-7"/><path class="k" d="M1 0v22.300h22"/></svg>
        <svg viewBox="0 0 23 23"><path class="b" d="M5 10h5v12H5z"/><path class="w" d="M10 2h5v20h-5z"/><path class="g" d="M15 6h5v16h-5z"/><path class="k1" d="M2 20l7-7 5 4 8-7"/><path class="k" d="M1 0v22.300h22"/></svg>
        <svg viewBox="0 0 23 23"><path class="g" d="M2 4l9 4 11-5v5l-10 5L2 9z"/><path d="M2 18h8q4-4 7-3h5" fill="none" stroke="#e07b1a" stroke-width="4"/><path d="M2 11q9 6 9 6t11-5" fill="none" stroke="#2a83c9" stroke-width="4"/><path class="k" d="M1 0v22.300h22"/></svg>

        <svg viewBox="0 0 23 23"><path class="w" d="M4 6h4v16H4zM9 8h4v14H9z"/><path class="b" d="M13 2h4v11h-4z"/><path class="w" d="M17 2h4v20h-4z"/><path class="k" d="M1 0v22.300h22"/></svg>
        <svg viewBox="0 0 23 23"><path class="b" d="M1 2h21v6H1zM4 8h15v7H4zM7 15h8v6H7z"/></svg>
        <svg viewBox="0 0 23 23"><path fill="#333" d="M16 2h4v4h-4zM4 15h4v4H4z"/><path fill="#84bdea" d="M5 6h3v3H5zM11 10h3v3h-3zM17 14h4v4h-4z"/><path class="k" d="M1 0v22.300h22"/></svg>
        <svg viewBox="0 0 23 23"><circle class="w" cx="11.500" cy="11.500" r="10.500"/><path class="b" d="M11.500 1a10.500 10.500 0 017 18.300l-7-7.800z"/><circle cx="11.500" cy="11.500" r="10.500" class="k1"/></svg>
        <svg viewBox="0 0 23 23"><circle cx="11.500" cy="11.500" r="8" fill="none" stroke="#1f6fb5" stroke-width="7"/><circle cx="11.500" cy="11.500" r="8" fill="none" stroke="#84bdea" stroke-width="4.500"/><path d="M3.500 11.500a8 8 0 018-8" fill="none" stroke="#666" stroke-width="6"/><path d="M3.500 10.500a8 8 0 017-7" fill="none" stroke="#fafafa" stroke-width="4"/></svg>
        <svg viewBox="0 0 23 23"><path class="w" d="M1 1h21v21H1zM12 7h10M12 14h10M17 7v15"/><path class="b" d="M1 1h10v21H1z"/></svg>

        <svg viewBox="0 0 23 23"><circle cx="13" cy="9" r="6.500" fill="#fff" stroke="#484644" stroke-width="1.300"/><path fill="#3f9a4f" d="M8 6l4-3 2 3-3 3zM14 9l4-2-1 6-3 1z"/><path class="k1" d="M9 0C2 4 2 16 12 18q5 0 8-4M12 18v4M5 22h13"/></svg>
        <svg viewBox="0 0 23 23"><path class="g" d="M1 3q6 2 11 0 5-2 10 0v10l-6 8-6-1-8-7z"/><path class="b" d="M1 1h9l1 9-9 2zM12 11l10-1q0 10-9 11-3-4-1-10z"/></svg>
        <svg viewBox="0 0 23 23"><path class="w" d="M1 17a10.500 10.500 0 0121 0h-6a4.500 4.500 0 00-9 0z"/><path class="b" d="M9 7q12-2 13 10h-6q0-5-5-5z"/><path d="M11 17l5-6" class="k"/></svg>
        <svg viewBox="0 0 23 23"><path class="w" d="M1 3h21v17H1z"/><text x="11.500" y="15" text-anchor="middle" font-size="9.500" font-family="Open Sans,sans-serif" fill="#1f7bc0">123</text><path d="M4 17.500h15" stroke="#999"/></svg>
        <svg viewBox="0 0 23 23"><path class="w" d="M1 1h21v21H1z"/><path d="M5 4v15" stroke="#666"/><path d="M7 6.500h12M7 14h12" stroke="#1f6fb5" stroke-width="2.200"/><path d="M7 10h6M7 17.500h6" stroke="#888"/></svg>
        <svg viewBox="0 0 23 23"><path class="w" d="M1 2h21v18H1z"/><path fill="#3f9a4f" d="M3 12l4.500-7 4.500 7z"/><path fill="#d83b3b" d="M11 5h9l-4.500 7z"/><path d="M4 15.500h15M4 18h8" stroke="#888"/></svg>

        <svg viewBox="0 0 23 23"><path class="w" d="M1 1h21v21H1z"/><path class="g" d="M1 1h21v3H1zM5 8h3v3H5zM5 15h3v3H5z"/><path d="M11 11h12l-4 6v6h-3v-6z" fill="#fff" stroke="#484644" stroke-width="1.200"/></svg>
        <svg viewBox="0 0 23 23"><path class="w" d="M1 1h21v21H1zM1 10h21M1 16h21M8 4v18M15 4v18"/><path class="g" d="M1 1h21v3H1z"/></svg>
        <svg viewBox="0 0 23 23"><path class="w" d="M1 1h21v21H1z"/><path fill="#84bdea" d="M15 4h7v18H1v-6h14z"/><path class="k1" d="M1 10h21M1 16h21M8 4v18M15 4v18M1 1h21v21H1z"/><path class="g" d="M1 1h21v3H1z"/></svg>
        <svg viewBox="0 0 23 23"><text x="11.500" y="19" text-anchor="middle" font-size="20" font-weight="700" font-family="Open Sans,sans-serif" fill="#1f7bc0">R</text></svg>
        <svg viewBox="0 0 23 23"><text x="11.500" y="17" text-anchor="middle" font-size="18.500" font-weight="700" font-family="Open Sans,sans-serif" fill="#1f7bc0">Py</text></svg>
        <svg viewBox="0 0 23 23"><path class="kb" d="M1 4h15"/><circle class="b" cx="18.500" cy="4" r="2.800"/><path class="k1" d="M1 10h11M1 16h6"/><circle class="w" cx="13" cy="10.500" r="1.500"/><circle class="w" cx="8" cy="16" r="1.500"/><path class="k" d="M1 0v22.300h22"/></svg>

        <svg viewBox="0 0 23 23"><path class="k" d="M9 11h5M12 3v17M12 3h3M12 20h3M12 11h3" stroke-width="1"/><path class="b" d="M1 8h8v6H1zM15 1h7v5h-7zM15 8.500h7v5h-7zM15 16h7v5h-7z"/></svg>
        <svg viewBox="0 0 23 23"><path d="M1 2h21v15H9l-4 5v-5H1z" fill="#fafafa" stroke="#2a6ca5" stroke-width="1.400"/></svg>
        <svg viewBox="0 0 23 23"><path d="M3 6V1h11l6 6v15H3v-9M14 1v6h6" fill="#fafafa" stroke="#484644" stroke-width="1.300"/><circle class="b" cx="4" cy="9.500" r="2.300"/><path d="M8 11h9M6 15h9" stroke="#3a8fd0" stroke-width="1.300"/></svg>
        <svg viewBox="0 0 23 23"><path d="M3 1h11l6 6v15H3zM14 1v6h6" fill="#fafafa" stroke="#484644" stroke-width="1.400"/><path fill="#333" d="M5 13h3v7H5zM10 16h3v4h-3zM15 11h3v9h-3z"/></svg>
        <svg viewBox="0 0 23 23"><path fill="#84bdea" stroke="#1f6fb5" stroke-width="1.200" d="M2 2h20v7l-6 6-3 7H2z"/><path d="M9 6h9l-6 7-5 6" fill="none" stroke="#fff" stroke-width="2"/><path fill="#d96f0c" d="M0 0h8v7l-4 7-4-7z"/><circle cx="19" cy="20" r="3" fill="#d96f0c"/><circle cx="22" cy="14" r="1.500" fill="#d96f0c"/></svg>
        <svg viewBox="0 0 23 23"><path d="M8 1.500h7l7.500 10-7.500 10H8L.5 11.500zM8 1.500l11.200 14.500M15 1.500L3.800 16M4 7l11 14.500M19.200 7L8 21.500" fill="#faf2fb" stroke="#8f3a9e" stroke-width="1.200"/></svg>

        <svg viewBox="0 0 23 23"><path d="M1 2h14l8 9-8 9H1l9-9zM4 20L17 4M9 20l11-13" fill="#fafafa" stroke="#1a7ed0" stroke-width="1.400"/></svg>
        <svg viewBox="0 0 23 23"><path d="M4 9h2v2H4zM11 9h2v2h-2zM18 9h2v2h-2z" fill="#333"/></svg>
      </div>
      <div class="wells">
        <p>Values</p>
        <div class="well">Add data fields here</div>
        <p class="dt">Drill through</p>
        <div class="trow"><span>Cross-report</span><span class="tg"><i></i>Off</span></div>
        <div class="trow t2"><span>Keep all filters</span><span class="tg onn">On<i></i></span></div>
        <div class="well w2">Add drill-through fields here</div>
      </div>
    </aside>
    <aside class="fields">
      <div class="ph"><h5>Fields</h5><svg><use href="#dbl"/></svg></div>
      <div class="fs"><svg><use href="#mag"/></svg>Search</div>
      <ul>
        <li>activitys activitys</li><li>activitys table 21</li><li>activitys table 22</li><li>CFM</li><li>INFO</li><li>Refresh Data</li><li>Refreshdate</li>
      </ul>
    </aside>
  </div>

  <div class="status">
    <span class="pg">Page 3 of 5</span>
    <svg class="zoom" viewBox="0 0 154 20"><path fill="#605e5c" d="M1 9h5v2H1zM10 9.500h125v1H10zM58 3h5v14h-5zM71 7h2v6h-2z"/><path d="M141 10h10M146 5v10" stroke="#605e5c" stroke-width="2"/></svg>
    <span class="pct">83%</span>
    <svg class="fit" viewBox="0 0 20 15"><path d="M1 1h18v13H1z" fill="none" stroke="#605e5c" stroke-width="1.600"/><path d="M4 6V4h3M13 4h3v2M16 9v2h-3M7 11H4V9" fill="none" stroke="#605e5c"/></svg>
    <span>Update available (click to download)</span>
  </div>

  <div class="taskbar tb2">
    <div class="slot start"><svg class="sm"><use href="#win"/></svg></div>
    <div class="tsb"><svg><use href="#mag"/></svg>Type here to search
      <svg class="art" viewBox="0 0 96 44"><ellipse cx="46" cy="24" rx="18" ry="20" fill="#e6e3f5"/><path fill="#c9632f" d="M4 18l26-12 12 24-28 12z"/><path fill="#f2eef8" stroke="#b9a9d0" d="M8 16l16-8 12 22-18 8z"/><path d="M14 17l10-5M16 21l10-5M18 25l10-5M20 29l10-5" stroke="#6b6280" stroke-width="1.300"/><path d="M10 8l3 32" stroke="#7fae35" stroke-width="2"/><circle cx="12" cy="6" r="6" fill="#f6c945"/><path d="M6 20q4 4 8 2" stroke="#6aa12f" stroke-width="3" fill="none"/><path fill="#f29ce8" d="M46 2l5 3 5-2-2 5 2 5-6-3z"/><path fill="#e9c08a" stroke="#c98b46" d="M54 17h16l-6 11 6 12H54l6-12z"/><path fill="#58a6ea" stroke="#2f6fb8" d="M74 10l18-5v20l-16 4z"/><path fill="#8b93a5" d="M70 34l24-5v3l-22 6z"/><circle cx="83" cy="38" r="2.500" fill="#52c98a"/><circle cx="28" cy="3" r="2" fill="#5ad0e8"/></svg>
    </div>
    <div class="slot"><svg class="sm"><use href="#ring"/></svg></div>
    <div class="slot"><svg class="sm"><use href="#tview"/></svg></div>
    <div class="slot"><svg><use href="#edge"/></svg></div>
    <div class="slot run two"><svg><use href="#folder"/></svg></div>
    <div class="slot"><svg><use href="#store"/></svg></div>
    <div class="slot"><svg><use href="#mail"/></svg></div>
    <div class="slot run"><svg><use href="#outlook"/></svg></div>
    <div class="slot run on"><svg><use href="#firefox"/></svg></div>
    <div class="slot run"><svg><use href="#chrome"/></svg></div>
    <div class="slot"><svg><use href="#dw"/></svg></div>
    <div class="slot run"><svg><use href="#pbi"/></svg></div>
    <div class="slot run"><svg><use href="#excel"/></svg></div>
    <div class="slot run"><svg><use href="#photos"/></svg></div>
    <div class="tray">
      <svg width="26" height="26" viewBox="0 0 26 26"><circle cx="13" cy="13" r="13" fill="url(#gSun)"/></svg>
      <span class="temp">82°F</span>
      <svg class="t1" width="17" height="10" viewBox="0 0 17 10"><path d="M1 9l7.500-7.500L16 9" class="tl"/></svg>
      <svg class="t2i" width="16" height="18" viewBox="0 0 16 18"><path d="M1.500 5h9v8h-9zM10.500 8l4-2v6l-4-2M3 2q5-2 9 0M3 16q5 2 9 0" class="tl"/></svg>
      <svg class="t3" width="20" height="14" viewBox="0 0 20 14"><path fill="#b8bcc4" d="M2 8q0-3 3-3 2-5 7-4 3 1 4 4z"/><path fill="#fff" d="M4 13q-4 0-4-3t4-3l4-1 4 1q2-2 5 0 3 0 3 3t-3 3z"/></svg>
      <svg class="t4" width="20" height="14" viewBox="0 0 20 14"><path d="M5 4h13v9H3V9" class="tl"/><path fill="#fff" d="M6 6h10v5H6zM18 7h2v3h-2z"/><path d="M1 0v3q2 3 4 0V0M3 5v4" class="tl"/></svg>
      <svg class="t5" width="16" height="16" viewBox="0 0 16 16"><circle cx="13.500" cy="14" r="1.500" fill="#fff"/><path d="M9 15q0-5 6-6M5 15Q5 6 15 5" class="tl"/><path d="M1 15Q1 2 15 1" class="tl" opacity=".5"/></svg>
      <svg class="t6" width="21" height="18" viewBox="0 0 21 18"><path d="M1 6h3l4-4v14l-4-4H1zM11 6q2 3 0 6M14 4q3 5 0 10M17 1q5 8 0 16" class="tl"/></svg>
      <span class="eng">ENG</span>
      <div class="clk">1:59 PM<br>10/11/2022</div>
      <div class="note"><svg width="20" height="20" viewBox="0 0 20 20"><path fill="#fff" d="M0 0h20v16H9l-4 4v-4H0z"/><path d="M4 4.500h12M4 8h12M4 11.500h8" stroke="#1c2b40" stroke-width="1.200"/></svg><b>16</b></div>
      <i class="peek"></i>
    </div>
  </div>

  <div class="modal">
    <svg class="mx"><use href="#x"/></svg>
    <h2>Publishing to Power BI</h2>
    <p class="succ"><svg viewBox="0 0 16 12"><path d="M1 7l4 4L15 1" fill="none" stroke="#2d8a35" stroke-width="1.500"/></svg>Success!</p>
    <p class="l1"><a>Open 'Outreach.pbix' in Power BI</a></p>
    <p class="l2"><a>Get Quick Insights</a></p>
    <div class="dyk">
      <svg viewBox="0 0 40 40"><circle cx="20" cy="20" r="20" fill="#f2c811"/><path d="M8 19h4v6H8zM13 14h4v11h-4zM18 9h4v16h-4zM23 14h4v4h-4z"/><path d="M24 20h6v9h-6z" fill="#f2c811" stroke="#000" stroke-width="1.500"/><path d="M26 26h2v1.500h-2z"/></svg>
      <div><h6>Did you know?</h6><p>You can create a portrait view of your report, tailored for mobile phones.<br>On the <b>View</b> tab, select <b>Mobile Layout</b>. <a>Learn more</a></p></div>
    </div>
    <button>Got it</button>
  </div>
</section>
</div>
</body>
</html>
```
FILE: styles.css
```css
* { box-sizing: border-box; }
body, h1, h2, h3, h4, h5, h6, p, dl, dd, ul, figure { margin: 0; padding: 0; font-weight: 400; }
body { width: 3840px; height: 1080px; overflow: hidden; background: #fff; font-family: "Open Sans", "Noto Sans", sans-serif; font-size: 14px; color: #252423; }
svg { display: block; flex: none; overflow: visible; }
.sprite { position: absolute; width: 0; height: 0; }
.desktop { display: flex; height: 1080px; }
.screen { width: 1920px; height: 1080px; display: flex; flex-direction: column; position: relative; overflow: hidden; }

/* ---- Firefox chrome ---- */
.tabs { height: 44px; background: #1c1b22; display: flex; align-items: center; color: #fbfbfe; }
.tab { width: 212.700px; height: 36px; padding: 0 13px 0 10px; display: flex; align-items: center; font-size: 12px; letter-spacing: -.4px; border-radius: 4px; }
.tab span { flex: 1; margin: 0 2px 0 6px; white-space: nowrap; overflow: hidden; mask-image: linear-gradient(90deg, #000 86%, transparent); }
.tab:first-child span, .tab.active span { mask-image: none; }
.tab.active { background: #42414d; width: 209px; margin: 0 1.700px 0 2px; padding: 0 11px 0 2px; }
.i16 { width: 16px; height: 16px; }
.tx { width: 9px; height: 9px; }
.plus { width: 12px; height: 12px; margin-left: 14px; }
.wctl { margin-left: auto; display: flex; gap: 36px; padding-right: 18px; }
.wctl svg { width: 10px; height: 10px; }
.nav { height: 41px; background: #2b2a33; border-bottom: 1px solid #0c0c0d; display: flex; align-items: center; padding-left: 16px; }
.ln { fill: none; stroke: #fbfbfe; stroke-width: 1.400; }
.navbtns { display: flex; gap: 20px; width: 215px; }
.nav svg { width: 16px; height: 16px; }
.url { width: 1386px; height: 32px; background: #1c1b22; border-radius: 4px; display: flex; align-items: center; gap: 12px; padding: 0 8px; color: #a0a0a8; font-size: 13.600px; letter-spacing: -.22px; }
.url p { flex: 1; margin-left: -2px; }
.url b { font-weight: 400; color: #fbfbfe; }
.navright { display: flex; gap: 20px; margin-left: auto; padding-right: 16px; }

/* ---- travel.state.gov page ---- */
.dos { height: 50px; background: #337ab7; color: #fff; display: flex; align-items: center; font-family: "Liberation Sans", Arial, sans-serif; padding: 0 422px 0 425px; }
.seal { width: 40px; height: 40px; }
.dosl { width: 201px; margin-left: 11px; text-align: center; }
.dosr { margin-left: auto; text-align: right; padding-top: 3px; }
.dos h1 { font-size: 18px; line-height: 20px; white-space: nowrap; }
.dos h2 { font-size: 14px; line-height: 20px; }
.doc { flex: 1; width: 1111px; margin-left: 405px; font-family: "Liberation Sans", Arial, sans-serif; font-size: 14px; line-height: 20px; color: #333; letter-spacing: .1px; white-space: nowrap; }
.tools { display: flex; justify-content: flex-end; gap: 4px; padding-top: 5px; }
.btn { height: 22px; display: flex; align-items: center; gap: 3px; padding: 0 6px 0 5px; border: 1px solid #ccc; border-radius: 3px; background: linear-gradient(#fff, #e0e0e0); font-size: 12px; letter-spacing: .05px; color: #333; box-shadow: 0 1px 1px #0001; }
.btn svg { width: 12px; height: 12px; }
.doc h3 { font-size: 24px; line-height: 26px; letter-spacing: 0; text-align: center; margin-top: 25px; }
.ok { height: 52px; margin: 30px 0 16px; border: 1px solid #b2dba1; border-radius: 4px; background: linear-gradient(#dff0d8, #c8e5bc); color: #165a24; text-align: center; font-size: 24px; line-height: 51px; letter-spacing: 0; box-shadow: 0 1px 2px #0001; }
.doc p { margin-bottom: 16px; }
.doc p b { letter-spacing: .27px; font-weight: 700; }
.doc p .wide { letter-spacing: .36px; }
.doc .mid { text-align: center; letter-spacing: .1px; }
.doc dl { display: grid; grid-template-columns: 285px auto; grid-auto-rows: 21px; line-height: 21px; margin-bottom: 20px; }
.doc dt { font-weight: 700; letter-spacing: .15px; }
.doc dd { font: 13.330px/17px "Liberation Mono", monospace; letter-spacing: 0; padding-top: 2px; }
.doc mark { background: #0078d7; color: #fff; display: inline-block; }
.doc .lk { color: #337ab7; }
.foot { display: flex; gap: 4px; margin-left: 355px; margin-top: 17px; height: 22px; }
.usa { width: 79px; height: 24px; position: relative; color: #23305f; font: 19px/22px "Liberation Serif", serif; letter-spacing: -.5px; }
.usa span { display: block; padding: 3px 0 0 7px; line-height: 18px; }
.usa i { color: #c0113c; font-style: normal; }
.usa svg { position: absolute; left: 0; top: 0; width: 30px; height: 22px; }
.usa small { display: block; font-size: 5px; line-height: 5px; margin: -2px 0 0 21px; letter-spacing: 0; }
.doc .fine { font-size: 12px; line-height: 17px; margin-top: 9px; letter-spacing: .12px; }

/* ---- taskbars ---- */
.taskbar { display: flex; flex: none; background: linear-gradient(90deg, #213840 0%, #20343f 55%, #1a2542 88%, #1b2743 100%); color: #fff; }
.tb1 { height: 40px; }
.slot { width: 49px; display: flex; align-items: center; justify-content: center; position: relative; }
.sys { width: 48px; }
.firstapp { margin-left: 3px; }
.slot svg { width: 25px; height: 25px; }
.slot .sm { width: 17px; height: 17px; }
.slot.on { background: #52636b; }
.slot.run::after { content: ""; position: absolute; left: 5px; right: 5px; bottom: 0; height: 2px; background: #76b9ed; }
.slot.on.run::after { left: 0; right: 0; }
.slot.two.run::after { border-right: 7px solid #5282a8; }
.clock { margin-left: auto; width: 63px; font-size: 12px; letter-spacing: -.4px; line-height: 18px; text-align: center; padding-top: 2px; }
.tb2 { height: 51px; border-top: 1px solid #18202a; }
.tb2 .slot { width: 62px; }
.tb2 .start { width: 60px; }
.tb2 .slot svg { width: 31px; height: 31px; }
.tb2 .slot .sm { width: 20px; height: 20px; }
.tb2 .slot.run::after { height: 3px; }
.tsb { width: 429px; height: 50px; background: #f3f2f1; border: 1px solid #b9bcbe; display: flex; align-items: center; padding-left: 15px; color: #222; font-size: 17.800px; }
.tsb > svg { width: 20px; height: 20px; margin-right: 14px; color: #222; }
.tsb > .art { width: 96px; height: 44px; margin: 0 2px 0 auto; }
.tray { flex: 1; display: flex; align-items: center; padding-left: 162px; }
.tray .temp { font-size: 17px; letter-spacing: -.4px; margin-left: 12px; width: 36px; }
.tl { fill: none; stroke: #fff; stroke-width: 1.300; }
.t1 { margin-left: 20px; }
.t2i { margin-left: 15px; }
.t3 { margin-left: 11px; }
.t4 { margin-left: 10px; }
.t5 { margin-left: 13px; }
.t6 { margin-left: 11px; }
.eng { font-size: 14px; margin-left: 13px; }
.clk { width: 82px; margin-left: 9px; font-size: 14.200px; line-height: 23px; text-align: center; letter-spacing: -.1px; }
.note { position: relative; margin-left: 16px; }
.note svg { margin-top: -2px; }
.note b { position: absolute; left: 9px; top: 6px; width: 22px; height: 22px; border-radius: 50%; background: #39414d; border: 1px solid #8a9199; font: 600 12px/20px "Open Sans", sans-serif; text-align: center; }
.peek { width: 1px; height: 50px; background: #667; margin-left: auto; margin-right: 5px; }

/* ---- Power BI chrome ---- */
.bi { background: #f3f2f1; }
.title { height: 43px; flex: none; background: #3b3a39; color: #fff; display: flex; align-items: center; padding-left: 21px; white-space: nowrap; }
.qa { width: 18px; height: 18px; margin-right: 20px; }
.cap { font-size: 14.200px; width: 403px; margin-left: 96px; padding-top: 6px; }
.tsearch { width: 584px; height: 30px; background: #cecccb; border: 1px solid #e1dfdd; border-radius: 2px; display: flex; align-items: center; gap: 13px; padding-left: 22px; color: #243a5e; font-size: 16px; }
.tsearch svg { width: 20px; height: 20px; color: #3b3a39; }
.user { margin-left: 368px; width: 118px; font-size: 14.200px; }
.ava { width: 20px; height: 20px; border-radius: 50%; background: #f3f2f1; margin-left: 12px; }
.bctl { display: flex; gap: 41px; margin-left: 40px; padding-top: 3px; }
.bctl svg { width: 14px; height: 14px; }
.menu { height: 42px; flex: none; display: flex; padding-left: 28px; font-size: 16.600px; line-height: 38px; }
.menu span { margin-right: 38px; height: 38px; }
.menu span:nth-child(1) { width: 26px; margin-right: 47px; }
.menu span:nth-child(2) { width: 48px; }
.menu span:nth-child(3) { width: 46px; }
.menu span:nth-child(4) { width: 75px; }
.menu span:nth-child(5) { width: 38px; }
.menu .cur { font-weight: 600; font-size: 16px; border-bottom: 3px solid #f2c811; }
.ribbon { height: 115px; flex: none; display: flex; padding-top: 3px; border-bottom: 1px solid #dcdad8; box-shadow: 0 2px 4px #0002; z-index: 2; }
.grp { height: 110px; border-right: 1px solid #d2d0ce; display: flex; flex-direction: column; justify-content: space-between; color: #3b3a39; }
.grp em { font-style: normal; font-size: 12px; line-height: 16px; margin-bottom: -2px; text-align: center; }
.items { display: flex; padding-top: 3px; }
.g1 { width: 201px; } .g1 .items { padding-left: 14px; }
.g2 { width: 431px; } .g2 .items { padding-left: 5px; }
.g3 { width: 146px; } .g3 .items { padding-left: 14px; }
.g4 { width: 184px; } .g4 .items { padding-left: 12px; }
.g5 { width: 143px; } .g5 .items { padding-left: 11px; }
.g6 { width: 93px; }
.g7 { width: 74px; }
.rb { flex: none; line-height: 20px; white-space: nowrap; font-size: 14px; letter-spacing: -.15px; text-align: center; }
.rb > svg { width: 38px; height: 38px; margin: 0 auto 4px; }
.rb s { text-decoration: none; display: flex; align-items: center; justify-content: center; gap: 2px; height: 20px; }
.rb s svg { width: 8px; height: 6px; margin-top: 3px; }
.rb br:has(+ s) { display: none; }
.dim, .small { color: #a6a4a2; }
.small { display: flex; flex-direction: column; padding-left: 6px; gap: 10px; padding-top: 2px; }
.small span { display: flex; align-items: center; gap: 7px; line-height: 20px; white-space: nowrap; font-size: 14px; letter-spacing: 0; }
.small svg { width: 18px; height: 20px; }
.fold { width: 11px; height: 8px; margin: 97px 6px 0 auto; }

/* ---- report area ---- */
.work { height: 800px; flex: none; display: flex; border-bottom: 1px solid #dcdad8; }
.rail { width: 51px; border-right: 1px solid #dedcda; display: flex; flex-direction: column; }
.rsel { height: 50px; border-left: 3px solid #f2c811; padding: 17px 0 0 14px; }
.rsel svg { width: 17px; height: 17px; margin: 0; }
.rail > svg { width: 20px; height: 20px; margin: 14px 0 0 16px; }
.rail > svg + svg { width: 24px; height: 24px; margin: 28px 0 0 14px; }
.center { width: 1417px; display: flex; flex-direction: column; }
.canvasrow { height: 756px; display: flex; background: #fff; }
.canvas { width: 1376px; padding: 0 22px 0 22px; border-right: 1px solid #a8a6a4; }
.page { height: 748px; border: 2px dotted #444; border-top: 0; padding-top: 10px; }
.band { height: 67px; background: #cbcbcb; display: flex; color: #fff; white-space: nowrap; }
.home { width: 58px; background: #808080; text-align: center; line-height: 67px; font-size: 13.500px; font-weight: 700; font-family: "Liberation Sans", Arial, sans-serif; letter-spacing: -.2px; }
.emblem { width: 48px; height: 42px; margin: 9px 6px 0 37px; }
.unhcr { width: 119px; padding-top: 14px; }
.unhcr strong { display: block; font: 900 31px/25px Lato, "Open Sans", sans-serif; letter-spacing: .8px; -webkit-text-stroke: .7px #fff; }
.unhcr small { display: block; font: 700 11px/14px "Liberation Sans", Arial, sans-serif; margin-top: 1px; letter-spacing: -.1px; }
.flag { width: 38px; height: 26px; margin: 15px 10px 0 18px; display: grid; grid-template-columns: repeat(3, 12.600px); grid-auto-rows: 13px; }
.flag i { background: #1a82c8; }
.flag i:nth-child(2) { background: #fde63a; grid-column: 3; }
.flag i:nth-child(3) { grid-column: 2; }
.swedo { width: 137px; padding-top: 14px; }
.swedo strong { display: block; font: 700 32px/26px Lato, "Open Sans", sans-serif; letter-spacing: 3.800px; }
.swedo small { display: block; font: 4px/6px "Liberation Sans", sans-serif; margin: 4px 0 0 8px; opacity: .75; }
.sl { padding-top: 6px; margin-left: 21px; }
.swedo + .sl { margin-left: 31px; }
.sl span { display: block; margin-left: -6px; font-size: 12.800px; line-height: 20px; height: 28px; letter-spacing: -.1px; }
.sl div { height: 29px; border: 1px solid #e3e3e3; display: flex; align-items: center; justify-content: space-between; padding: 1px 5px 0 6px; color: #605e5c; font-size: 13px; letter-spacing: -.4px; }
.sl svg { width: 14px; height: 8px; }
.up1 { margin-top: -1px; }
.up3 { margin-top: -3px; }
.tblrow { display: flex; height: 242px; }
.tbl { width: 1153px; margin-left: 5px; }
.tbl h4 { font-size: 18.200px; font-weight: 600; color: #808080; line-height: 26px; padding: 31px 0 3px 556px; height: 61px; letter-spacing: .28px; }
.th { height: 32px; border: 2px solid #4aa5ff; border-bottom: 3px solid #8cc4fa; display: grid; grid-template-columns: 609px 51px 51px 50px 63px 88px 105px 74px 54px; padding-left: 5px; font-weight: 700; font-size: 12.600px; line-height: 23px; letter-spacing: -.2px; }
.th span { white-space: nowrap; }
.rows { font-size: 13px; letter-spacing: .02px; overflow: hidden; }
.rows p { height: 21px; line-height: 20px; padding-left: 7px; white-space: nowrap; width: 700px; }
.rows p:nth-child(even) { background: #ebebeb; }
.r1 { height: 120px; }
.r1 p:nth-child(n+5) { line-height: 18px; }
.tot1 { display: block; padding-left: 7px; line-height: 21px; height: 20px; font-size: 13px; }
.sbar { width: 10px; height: 164px; margin: 61px 0 0 153px; background: #f1f1f1; color: #444; display: flex; flex-direction: column; align-items: center; }
.sbar svg { width: 8px; height: 5px; margin-top: 11px; transform: scaleY(-1); }
.sbar svg:last-child { transform: none; margin-top: 31px; }
.sbar i { width: 10px; height: 89px; background: #cdcdcd; margin-top: 12px; }
.second h4 { padding-top: 0; height: 29px; padding-left: 559px; }
.th.b { height: 31px; border-width: 2px; border-color: #2b90f0 #4aa5ff #6fb6f8; }
.th.b span { line-height: 18px; }
.th.b small { font-size: 11px; line-height: 7px; display: block; }
.th.b br { display: none; }
.r2 { height: 147px; }
.r2 p:nth-child(n+4) { line-height: 19px; }
.tot2 { display: grid; grid-template-columns: 605px 44px 51px 51px 62px 84px 105px 74px 63px; padding-left: 7px; font-size: 12.600px; line-height: 19px; height: 19px; text-align: right; }
.tot2 b:first-child { text-align: left; font-size: 13px; border-right: 1px solid #2b90f0; }
.filters { width: 41px; display: flex; flex-direction: column; align-items: flex-start; padding: 15px 0 0 15px; }
.filters svg + svg { margin: 22px 0 10px 1px; }
.flip { transform: scaleX(-1); }
.filters span { writing-mode: vertical-rl; font-size: 16px; font-weight: 600; line-height: 18px; margin-left: -3px; letter-spacing: .1px; }
.ptabs { height: 44px; display: flex; font-size: 14px; line-height: 43px; text-align: center; }
.arr { width: 50px; display: flex; align-items: center; gap: 22px; padding-left: 8px; border-right: 1px solid #c8c6c4; }
.arr svg { width: 6px; height: 10px; }
.ptabs span { border-right: 1px solid #c8c6c4; letter-spacing: 0; }
.ptabs .sel { background: #fff; border-bottom: 5px solid #f2c811; color: #1b1a6a; }
.add { width: 49px; height: 40px; background: #f2c811; margin-top: 2px; display: flex; align-items: center; justify-content: center; }
.add svg { width: 14px; height: 14px; }

/* ---- side panes ---- */
.viz { width: 226px; border-left: 1px solid #dedcda; display: flex; flex-direction: column; }
.fields { width: 226px; border-left: 1px solid #dedcda; }
.ph { display: flex; justify-content: space-between; align-items: center; padding: 12px 10px 0 10px; height: 38px; }
.ph svg { width: 16px; height: 16px; margin-top: -2px; }
.ph h5 { font-size: 18.400px; font-weight: 600; }
.bv { padding-left: 10px; line-height: 20px; margin-top: 10px; font-size: 14px; letter-spacing: -.1px; -webkit-text-stroke: .2px; }
.modes { display: flex; margin: 4px 0 0 10px; }
.m1 { width: 40px; height: 40px; background: #d2d0ce; border-radius: 2px; padding: 5px; }
.m1 svg, .m2 { width: 30px; height: 30px; }
.m2 { margin: 5px 0 0 47px; }
.notch { width: 225px; height: 11px; margin-top: 4px; }
.vg { display: grid; grid-template-columns: repeat(6, 23px); gap: 12px; padding: 17px 0 0 13px; height: 264px; align-content: start; }
.vg svg { width: 23px; height: 23px; }
.k { fill: none; stroke: #3b3a39; stroke-width: 1.500; }
.k1 { fill: none; stroke: #484644; stroke-width: 1.200; }
.kb { fill: none; stroke: #1f7bc0; stroke-width: 1.400; }
.b { fill: #84bdea; stroke: #1f6fb5; stroke-width: 1.100; }
.g { fill: #c8c6c4; stroke: #797775; stroke-width: 1; }
.w { fill: #fafafa; stroke: #484644; stroke-width: 1.100; }
.wells { border-top: 1px solid #d8d6d4; padding: 10px 7px 0 5px; flex: 1; font-size: 14px; }
.wells p { padding-left: 10px; line-height: 21px; letter-spacing: -.1px; }
.well { height: 35px; margin-top: 7px; border: 1px dashed #b9b7b5; border-radius: 2px; background: #fff; padding-left: 13px; line-height: 31px; white-space: nowrap; letter-spacing: .15px; }
.wells .dt { font-weight: 600; color: #484644; margin-top: 12px; margin-bottom: 10px; }
.trow { display: flex; justify-content: space-between; align-items: center; height: 20px; padding-left: 10px; }
.trow > span:first-child { margin-top: -1px; }
.t2 { margin-top: 14px; }
.tg { width: 40px; height: 20px; border-radius: 10px; border: 1px solid #797775; background: #fff; font-size: 11px; color: #605e5c; display: flex; align-items: center; gap: 2px; padding-left: 6px; letter-spacing: -.2px; }
.tg i { width: 10px; height: 10px; border-radius: 50%; background: #605e5c; }
.onn { background: #605e5c; color: #fff; font-weight: 600; border-color: #605e5c; gap: 3px; }
.onn i { background: #fff; }
.w2 { height: 33px; margin-top: 12px; padding-left: 10px; line-height: 32px; }
.fs { width: 215px; height: 33px; margin: 19px 0 0 5px; border: 1px solid #797775; border-radius: 2px; background: #fff; display: flex; align-items: center; gap: 8px; padding-left: 9px; font-size: 16px; color: #484644; }
.fs svg { width: 19px; height: 19px; }
.fields ul { list-style: none; margin-top: 11px; }
.fields li { height: 30px; line-height: 30px; font-size: 14px; padding-left: 52px; color: #484644; letter-spacing: .1px; position: relative; }
.fields li::before { content: ""; position: absolute; left: 10px; top: 10px; width: 9px; height: 9px; border: solid #797775; border-width: 1px 1px 0 0; transform: rotate(45deg); }
.fields li::after { content: ""; position: absolute; left: 28px; top: 7px; width: 17px; height: 16px; border: 1.500px solid #3b3a39; border-top-width: 3px; background: repeating-linear-gradient(90deg, transparent 0 4px, #484644 4px 5px), repeating-linear-gradient(#fafafa 0 3px, #484644 3px 4px); }

/* ---- status bar ---- */
.status { height: 29px; flex: none; display: flex; align-items: center; padding-left: 7px; font-size: 14px; color: #484644; white-space: nowrap; padding-top: 2px; }
.pg { width: 1399px; font-size: 13.700px; }
.zoom { width: 154px; height: 20px; margin-top: -1px; }
.pct { width: 61px; margin-left: 18px; font-size: 13.800px; }
.fit { width: 20px; height: 15px; margin-right: 15px; }
.status span:last-child { letter-spacing: .12px; }

/* ---- publish dialog ---- */
.modal { position: absolute; left: 647px; top: 369px; width: 626px; height: 366px; background: #fff; border: 1px solid #b3b1af; box-shadow: 2px 3px 4px #0009; padding: 27px 37px 37px; z-index: 3; display: flex; flex-direction: column; }
.mx { position: absolute; right: 13px; top: 10px; width: 14px; height: 14px; color: #605e5c; }
.modal h2 { font-size: 23.600px; font-weight: 600; line-height: 30px; color: #333; }
.succ { display: flex; gap: 8px; align-items: center; font-size: 15.300px; line-height: 20px; margin-top: 27px; color: #484644; }
.succ svg { width: 16px; height: 12px; }
.modal a { color: #0078d4; }
.l1 { font-size: 15.300px; line-height: 20px; margin-top: 18px; }
.l1 a { text-decoration: underline; }
.l2 { font-size: 15.600px; line-height: 20px; margin-top: 16px; padding-bottom: 17px; border-bottom: 1px solid #e3e1df; }
.dyk { display: flex; gap: 17px; margin-top: 15px; }
.dyk > svg { width: 40px; height: 40px; margin-top: 2px; }
.dyk h6 { font-size: 14.600px; font-weight: 700; line-height: 22px; letter-spacing: -.3px; }
.dyk p { font-size: 14.200px; line-height: 20px; color: #666; margin-top: 3px; white-space: nowrap; }
.dyk b { font-weight: 700; letter-spacing: -.2px; }
.modal button { width: 75px; height: 28px; margin: auto 0 0 auto; border: 0; background: #f2c811; font: 13.600px "Open Sans", sans-serif; color: #222; }
```
